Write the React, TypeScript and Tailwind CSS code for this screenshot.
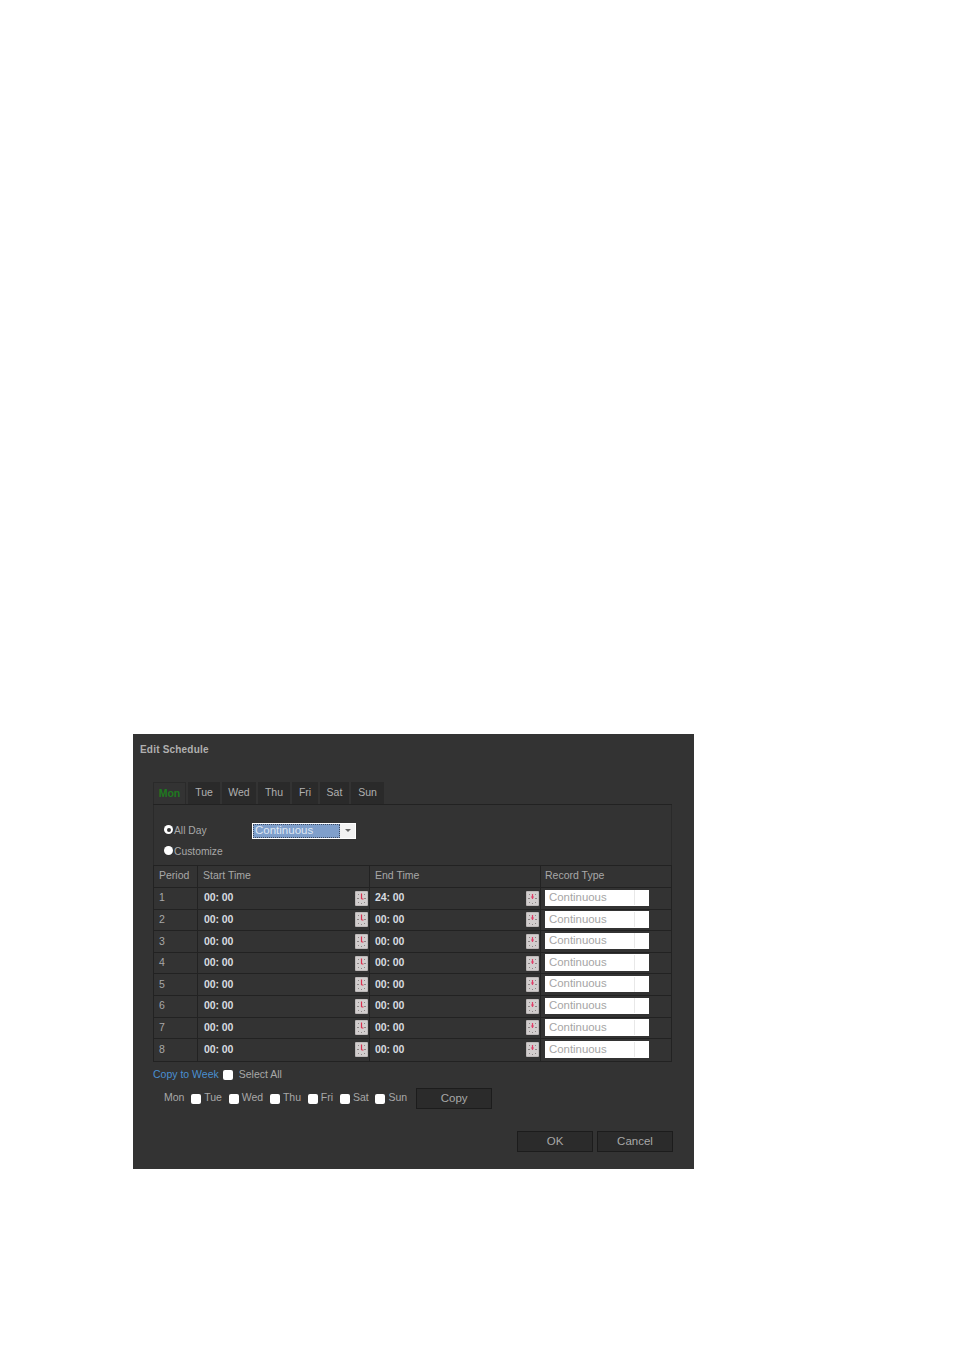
import React from "react";

const tabs = [
  { label: "Mon", width: "w-[33px]" },
  { label: "Tue", width: "w-[32px]" },
  { label: "Wed", width: "w-[34px]" },
  { label: "Thu", width: "w-[32px]" },
  { label: "Fri", width: "w-[26px]" },
  { label: "Sat", width: "w-[29px]" },
  { label: "Sun", width: "w-[33px]" },
];

const rows = [
  { period: 1, end: "24" },
  { period: 2, end: "00" },
  { period: 3, end: "00" },
  { period: 4, end: "00" },
  { period: 5, end: "00" },
  { period: 6, end: "00" },
  { period: 7, end: "00" },
  { period: 8, end: "00" },
];

const copyDays = ["Tue", "Wed", "Thu", "Fri", "Sat", "Sun"];

const ClockIcon = ({ red }: { red?: boolean }) => (
  <svg width="13" height="15" viewBox="0 0 13 15" className="shrink-0">
    <rect x="0" y="0" width="13" height="15" rx="1" fill="#bdb9b9" />
    <rect x="1" y="1" width="11" height="13" fill="#d2cece" />
    <g stroke="#8b8585" strokeWidth="1">
      <path d="M3 3l1 1M10 3L9 4M2 7.500h2M9 7.500h2M3 12l1-1M10 12l-1-1M6.500 12v1" />
    </g>
    {red ? (
      <path d="M6.500 2.500v5.500M6.500 8h2" stroke="#d9304f" strokeWidth="1.200" fill="none" />
    ) : (
      <path d="M6.500 3v5M5 6h3" stroke="#e0406a" strokeWidth="1.200" fill="none" />
    )}
  </svg>
);

const Checkbox = () => <span className="block h-[10px] w-[10px] shrink-0 rounded-[2px] bg-white" />;

const DarkButton = ({ label, width }: { label: string; width: string }) => (
  <button
    type="button"
    className={`h-[21px] ${width} border border-[#1c1c1c] bg-[#2b2b2b] text-[11.500px] leading-none text-[#a8a8a8]`}
  >
    {label}
  </button>
);

export default function App() {
  return (
    <div className="min-h-[1349px] bg-white pl-[133px] pt-[734px] font-['Liberation_Sans',Arial,sans-serif]">
      <div className="flex h-[435px] w-[561px] flex-col bg-[#333333] text-[10.500px] text-[#a8a8a8]">
        <div className="pl-[7px] pt-[10px] text-[10px] font-bold leading-[12px] tracking-[0.2px] text-[#b0b0b0]">
          Edit Schedule
        </div>

        {/* tabs */}
        <div className="ml-[20px] mt-[26px] flex h-[23px] w-[519px] gap-[2px] border-b border-[#222222]">
          {tabs.map((tab, i) => (
            <div
              key={tab.label}
              className={`flex h-[22px] ${tab.width} items-center justify-center ${
                i === 0
                  ? "border-r border-t border-l border-[#2a2a2a] font-bold text-[#1f7a1f]"
                  : "bg-[#2a2a2a] text-[#b0b0b0]"
              }`}
            >
              {tab.label}
            </div>
          ))}
        </div>

        {/* all day / customize */}
        <div className="ml-[20px] flex h-[60px] w-[519px] flex-col border-l border-r border-[#2a2a2a] pl-[10px] pt-[15px] text-[10.300px]">
          <div className="flex h-[21px] items-center">
            <span className="mb-[2px] flex h-[9px] w-[9px] items-center justify-center rounded-full bg-white">
              <span className="h-[4px] w-[4px] rounded-full bg-[#333333]" />
            </span>
            <span className="ml-[1px] w-[78px] text-[#a8a8a8]">All Day</span>
            <div className="flex h-[16px] w-[104px] items-center border border-white bg-white">
              <div className="flex h-full w-[87px] items-center bg-[#7f9fcb] pl-[2px] text-[11.500px] leading-none text-[#dfe8f5] outline-1 -outline-offset-1 outline-dotted outline-[#3c4a60]">
                Continuous
              </div>
              <div className="flex h-full flex-1 items-center justify-center bg-[#f2f2f2]">
                <span className="h-0 w-0 border-x-[3.500px] border-t-[3px] border-x-transparent border-t-[#666666]" />
              </div>
            </div>
          </div>
          <div className="flex h-[21px] items-center">
            <span className="mb-[3px] h-[9px] w-[9px] rounded-full bg-white" />
            <span className="ml-[1px]">Customize</span>
          </div>
        </div>

        {/* periods */}
        <div className="ml-[20px] w-[519px] border border-[#222222]">
          <div className="flex h-[22px] items-center border-b border-[#222222]">
            <div className="flex h-full w-[44px] items-center border-r border-[#222222] pb-[2px] pl-[5px]">Period</div>
            <div className="flex h-full w-[172px] items-center border-r border-[#222222] pb-[2px] pl-[5px]">Start Time</div>
            <div className="flex h-full w-[171px] items-center border-r border-[#222222] pb-[2px] pl-[5px]">End Time</div>
            <div className="flex h-full flex-1 items-center pb-[2px] pl-[4px]">Record Type</div>
          </div>
          {rows.map((row, i) => (
            <div
              key={row.period}
              className={`flex h-[21.600px] items-center ${i < rows.length - 1 ? "border-b border-[#222222]" : ""}`}
            >
              <div className="flex h-full w-[44px] items-center border-r border-[#222222] pl-[5px]">{row.period}</div>
              <div className="flex h-full w-[172px] items-center justify-between border-r border-[#222222] pl-[6px] pr-[1px]">
                <span className="font-bold tracking-[-0.1px] text-[#d8dce0]">00: 00</span>
                <ClockIcon red />
              </div>
              <div className="flex h-full w-[171px] items-center justify-between border-r border-[#222222] pl-[5px] pr-[1px]">
                <span className="font-bold tracking-[-0.1px] text-[#d8dce0]">{row.end}: 00</span>
                <ClockIcon />
              </div>
              <div className="flex h-full flex-1 items-center pl-[4px]">
                <div className="mb-[1px] flex h-[16.500px] w-[104px] items-center bg-white pl-[4px] text-[11.400px] leading-none text-[#a5a5a5]">
                  <span className="flex-1">Continuous</span>
                  <span className="mr-[1px] h-[15px] w-[14px] border-l border-[#e8e8e8]" />
                </div>
              </div>
            </div>
          ))}
        </div>

        {/* copy to week */}
        <div className="ml-[20px] mt-[7px] flex h-[12px] items-center">
          <span className="text-[#4a8fd0]">Copy to Week</span>
          <span className="ml-[4px]">
            <Checkbox />
          </span>
          <span className="ml-[6px]">Select All</span>
        </div>

        <div className="ml-[31px] mt-[6px] flex h-[24px] items-center">
          <span className="mb-[2px]">Mon</span>
          {copyDays.map((day) => (
            <span key={day} className="ml-[6.800px] flex items-center gap-[3px]">
              <Checkbox />
              <span className="mb-[2px]">{day}</span>
            </span>
          ))}
          <span className="ml-[9px]">
            <DarkButton label="Copy" width="w-[76px]" />
          </span>
        </div>

        <div className="mr-[21px] mt-[20px] flex justify-end gap-[4px]">
          <DarkButton label="OK" width="w-[76px]" />
          <DarkButton label="Cancel" width="w-[76px]" />
        </div>
      </div>
    </div>
  );
}
